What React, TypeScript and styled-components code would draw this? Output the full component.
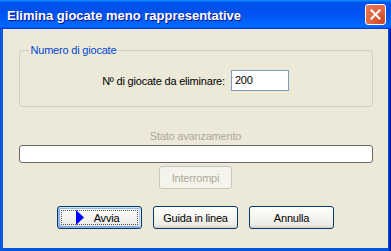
import React from "react";
import styled, { createGlobalStyle } from "styled-components";

const Global = createGlobalStyle`
  html, body { margin: 0; padding: 0; background: #ffffff; }
  body { width: 391px; height: 251px; overflow: hidden; }
`;

const Window = styled.div`
  width: 391px;
  height: 251px;
  box-sizing: border-box;
  display: flex;
  flex-direction: column;
  background: #0831d9;
  font-family: Tahoma, "Liberation Sans", Arial, sans-serif;
  font-size: 11px;
  letter-spacing: -0.2px;
  color: #000;
`;

const TitleBar = styled.div`
  height: 29px;
  flex: none;
  display: flex;
  align-items: center;
  justify-content: space-between;
  padding: 0 5px 0 7px;
  box-sizing: border-box;
  background: linear-gradient(
    180deg,
    #0997ff,
    #0053ee 8%,
    #0050ee 40%,
    #06f 88%,
    #06f 93%,
    #005bff 95%,
    #003dd7 96%,
    #003dd7
  );
`;

const Title = styled.span`
  font-family: "Trebuchet MS", "Liberation Sans", Arial, sans-serif;
  font-weight: bold;
  font-size: 13px;
  letter-spacing: 0;
  color: #fff;
  text-shadow: 1px 1px #0f1089;
  padding-top: 1px;
`;

const CloseButton = styled.div`
  width: 21px;
  height: 21px;
  box-sizing: border-box;
  border: 1px solid #fff;
  border-radius: 3px;
  background: radial-gradient(circle at 85% 85%, #cc4622 0%, #e2643f 45%, #e8795a 100%);
  display: flex;
  align-items: center;
  justify-content: center;
`;

const Frame = styled.div`
  flex: 1;
  display: flex;
  padding: 0 3px 3px 3px;
  background: linear-gradient(90deg, #0831d9 0, #166aee 1px, #0855dd 2px, #0855dd calc(100% - 3px), #003bda calc(100% - 2px), #001ea0 calc(100% - 1px), #00138c 100%);
`;

const Body = styled.div`
  flex: 1;
  background: #ece9d8;
  display: flex;
  flex-direction: column;
  align-items: center;
  padding-top: 14px;
`;

const Group = styled.fieldset`
  width: 354px;
  box-sizing: border-box;
  margin: 0;
  padding: 0 0 15px 0;
  border: 1px solid #d0d0bf;
  border-radius: 4px;
  display: flex;
  justify-content: center;
`;

const Legend = styled.legend`
  color: #0046d5;
  padding: 0 2px;
  margin-left: 9px;
  line-height: 14px;
`;

const Row = styled.div`
  display: flex;
  align-items: center;
  gap: 6px;
  margin-top: 13px;
`;

const Input = styled.div`
  width: 58px;
  height: 21px;
  box-sizing: border-box;
  border: 1px solid #7f9db9;
  background: #fff;
  padding: 3px 3px;
  line-height: 13px;
`;

const Status = styled.div`
  color: #aca899;
  line-height: 13px;
  margin-top: 23px;
`;

const Progress = styled.div`
  width: 354px;
  height: 18px;
  box-sizing: border-box;
  margin-top: 2px;
  border: 1px solid #686868;
  border-radius: 3px;
  background: #fff;
`;

const Button = styled.button<{ $primary?: boolean; $width: number }>`
  width: ${(p) => p.$width}px;
  height: 23px;
  box-sizing: border-box;
  font-family: inherit;
  font-size: 11px;
  letter-spacing: inherit;
  color: #000;
  border: 1px solid #003c74;
  border-radius: 3px;
  background: linear-gradient(180deg, #ffffff 0%, #f6f5f1 45%, #ecebe6 85%, #d6d0c5 100%);
  padding: 0;
  display: flex;
  align-items: center;
  justify-content: center;
  position: relative;
  box-shadow: ${(p) =>
    p.$primary
      ? "inset -1px 1px #cee7ff, inset 1px 2px #98b8ea, inset -2px 2px #bcd4f6, inset 1px -1px #89ade4, inset 2px -2px #89ade4"
      : "none"};
  &:disabled {
    border-color: #c9c7ba;
    color: #aca899;
    background: #f5f4ea;
  }
`;

const Focus = styled.span`
  position: absolute;
  inset: 3px;
  border: 1px dotted #555;
  pointer-events: none;
`;

const ButtonRow = styled.div`
  display: flex;
  gap: 11px;
  margin-top: 17px;
`;

const Play = styled.svg`
  margin-right: 10px;
  margin-left: -4px;
`;

export default function App() {
  return (
    <>
      <Global />
      <Window>
        <TitleBar>
          <Title>Elimina giocate meno rappresentative</Title>
          <CloseButton>
            <svg width="11" height="11" viewBox="0 0 11 11">
              <path d="M1.5 1.5 L9.5 9.5 M9.5 1.5 L1.5 9.5" stroke="#fff" strokeWidth="2" strokeLinecap="square" />
            </svg>
          </CloseButton>
        </TitleBar>
        <Frame>
          <Body>
            <Group>
              <Legend>Numero di giocate</Legend>
              <Row>
                <span>Nº di giocate da eliminare:</span>
                <Input>200</Input>
              </Row>
            </Group>
            <Status>Stato avanzamento</Status>
            <Progress />
            <Button $width={73} disabled style={{ marginTop: 3 }}>
              Interrompi
            </Button>
            <ButtonRow>
              <Button $width={85} $primary>
                <Play width="8" height="15" viewBox="0 0 8 15">
                  <path d="M0 0 L8 7.5 L0 15 Z" fill="#0000ff" />
                </Play>
                Avvia
                <Focus />
              </Button>
              <Button $width={85}>Guida in linea</Button>
              <Button $width={85}>Annulla</Button>
            </ButtonRow>
          </Body>
        </Frame>
      </Window>
    </>
  );
}
